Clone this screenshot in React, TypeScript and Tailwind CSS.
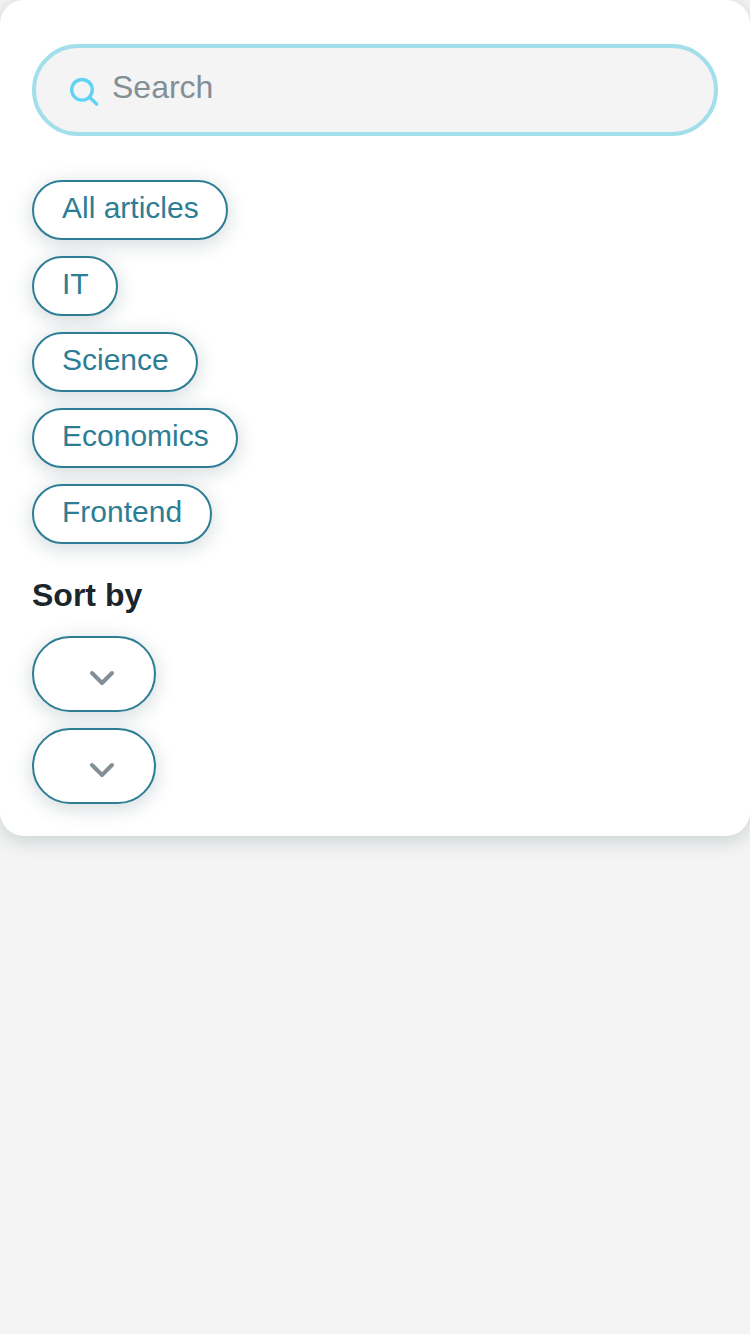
import React from "react";

const categories = ["All articles", "IT", "Science", "Economics", "Frontend"];

function SearchIcon() {
  return (
    <svg className="mt-1 size-8 shrink-0" viewBox="0 0 32 32" fill="none" stroke="#60d3f2" strokeWidth="3.4" strokeLinecap="round" strokeLinejoin="round">
      <circle cx="14" cy="13.8" r="10.3" />
      <path d="M21.3 21.1L28.6 28.1" />
    </svg>
  );
}

function SortButton() {
  return (
    <button aria-label="Sort" className="flex h-19 w-31 items-center justify-center rounded-full border-2 border-[#2d7d95] bg-white pt-2 pl-4 shadow-[0_4px_20px_rgba(20,60,70,0.2)]">
      <svg className="h-4 w-7" viewBox="0 0 28 16" fill="none" stroke="#828f96" strokeWidth="4" strokeLinecap="round" strokeLinejoin="round">
        <path d="M4 3L14 13L24 3" />
      </svg>
    </button>
  );
}

export default function App() {
  return (
    <div className="min-h-screen bg-[#f4f4f4] font-['Liberation_Sans',sans-serif]">
      <main className="h-[836px] rounded-3xl bg-white px-8 pt-11 shadow-[0_4px_20px_rgba(20,60,70,0.2)]">
        <div className="flex h-23 items-center rounded-full border-4 border-[#a2dfea] bg-[#f4f4f4] pl-8">
          <SearchIcon />
          <span className="ml-3 -mt-1.5 text-[32px] leading-9 text-[#828f96]">Search</span>
        </div>
        <nav className="mt-11 flex flex-col items-start gap-4">
          {categories.map((name) => (
            <button key={name} className="h-15 rounded-full border-2 border-[#2d7d95] bg-white pr-[27.6px] pl-7 pb-1 text-[30px] leading-8 text-[#2d7d95] shadow-[0_4px_20px_rgba(20,60,70,0.2)]">
              {name}
            </button>
          ))}
        </nav>
        <h2 className="mt-[31px] text-[32px] leading-10 font-bold text-[#1a262b]">Sort by</h2>
        <div className="mt-[21px] flex flex-col items-start gap-4">
          <SortButton />
          <SortButton />
        </div>
      </main>
    </div>
  );
}
